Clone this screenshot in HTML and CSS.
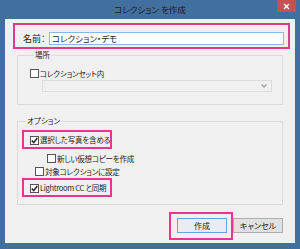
FILE: index.html
```html
<!DOCTYPE html>
<html lang="ja">
<head>
<meta charset="utf-8">
<link rel="stylesheet" href="styles.css">
</head>
<body>
<div class="window">
  <div class="titlebar">
    <span class="title">コレクション を作成</span>
    <div class="close"><svg width="7" height="7" viewBox="0 0 7 7"><path d="M1 1L6 6M6 1L1 6" stroke="#fff" stroke-width="1.4"/></svg></div>
  </div>
  <div class="client">
    <div class="hl name-row">
      <span class="name-label">名前：</span>
      <div class="input">コレクション・デモ</div>
    </div>
    <fieldset class="group place">
      <legend>場所</legend>
      <div class="check"><span class="box"></span><span class="lbl">コレクションセット内</span></div>
      <div class="select"><svg width="6" height="4" viewBox="0 0 6 4"><path d="M0.5 0.5L3 3L5.5 0.5" fill="none" stroke="#a0a0a0" stroke-width="1.3"/></svg></div>
    </fieldset>
    <fieldset class="group options">
      <legend>オプション</legend>
      <div class="hl hl-check">
        <div class="check"><span class="box checked"><svg width="7" height="7" viewBox="0 0 7 7"><path d="M0.8 3.6L2.7 5.6L6.3 1" fill="none" stroke="#222" stroke-width="1.5"/></svg></span><span class="lbl">選択した写真を含める</span></div>
      </div>
      <div class="check sub"><span class="box"></span><span class="lbl">新しい仮想コピーを作成</span></div>
      <div class="check plain"><span class="box"></span><span class="lbl">対象コレクションに設定</span></div>
      <div class="hl hl-check">
        <div class="check"><span class="box checked"><svg width="7" height="7" viewBox="0 0 7 7"><path d="M0.8 3.6L2.7 5.6L6.3 1" fill="none" stroke="#222" stroke-width="1.5"/></svg></span><span class="lbl latin">Lightroom CC と同期</span></div>
      </div>
    </fieldset>
    <div class="buttons">
      <div class="hl btn-hl"><div class="btn primary">作成</div></div>
      <div class="btn">キャンセル</div>
    </div>
  </div>
</div>
</body>
</html>
```
FILE: styles.css
```css
* { box-sizing: border-box; }
html, body { margin: 0; padding: 0; }
body {
  width: 300px;
  height: 249px;
  overflow: hidden;
  font-family: "Noto Sans CJK JP", "Noto Sans", sans-serif;
  font-feature-settings: "palt" 1;
  color: #222;
  font-size: 8px;
  white-space: nowrap;
}
.window {
  width: 300px;
  height: 249px;
  background: #41709f;
  display: flex;
  flex-direction: column;
  padding: 0 5px 6px 5px;
}
.titlebar {
  height: 19px;
  position: relative;
  display: flex;
  justify-content: center;
  align-items: flex-start;
}
.title {
  margin-top: 3px;
  font-size: 8.5px;
  line-height: 12px;
  color: #1b1b1b;
}
.close {
  position: absolute;
  right: -1px;
  top: 0;
  width: 19px;
  height: 12px;
  background: #c75050;
  display: flex;
  align-items: center;
  justify-content: center;
}
.client {
  flex: 1;
  background: #f0f0f0;
  display: flex;
  flex-direction: column;
  padding: 4px 12px 0 8px;
}
.hl {
  border: 2px solid #e4378d;
}
.name-row {
  width: 277px;
  height: 26px;
  display: flex;
  align-items: center;
  padding: 5px 4px 0 8px;
}
.name-label {
  width: 26px;
  font-size: 9px;
  line-height: 12px;
}
.input {
  width: 235px;
  height: 13px;
  background: #fff;
  border: 1px solid #8ab8e6;
  font-size: 8.5px;
  line-height: 11px;
  padding-left: 2px;
}
.group {
  margin: 1px 0 0 4px;
  width: 266px;
  border: 1px solid #dadada;
  padding: 0;
  min-width: 0;
}
.group legend {
  padding: 0 1px;
  margin-left: 4px;
  font-size: 7.5px;
  line-height: 10px;
}
.place {
  padding: 7px 0 12px 12px;
}
.check {
  display: flex;
  align-items: center;
  height: 13px;
}
.box {
  width: 9px;
  height: 9px;
  border: 1px solid #555;
  background: #fff;
  display: flex;
  align-items: center;
  justify-content: center;
  flex: none;
}
.lbl {
  margin-left: 1px;
  font-size: 7.5px;
  line-height: 12px;
  letter-spacing: -0.2px;
}
.latin {
  font-size: 7.5px;
  letter-spacing: -0.3px;
}
.select {
  margin: 0 0 0 12px;
  width: 230px;
  height: 12px;
  border: 1px solid #dcdcdc;
  display: flex;
  align-items: center;
  justify-content: flex-end;
  padding-right: 4px;
}
.options {
  margin-top: 11px;
  padding: 4px 0 7px 4px;
}
.hl-check {
  width: 90px;
  height: 19px;
  padding: 1px 0 0 6px;
  display: flex;
  align-items: center;
}
.sub {
  margin: 3px 0 0 25px;
}
.plain {
  margin: 0 0 0 13px;
}
.buttons {
  margin-top: 7px;
  display: flex;
  justify-content: flex-end;
  align-items: flex-start;
}
.btn-hl {
  width: 64px;
  height: 28px;
  padding: 4px 4px 0 6px;
}
.btn {
  width: 50px;
  height: 15px;
  border: 1px solid #adadad;
  background: #e1e1e1;
  display: flex;
  align-items: center;
  justify-content: center;
  font-size: 8px;
  line-height: 12px;
  margin-top: 6px;
}
.btn.primary {
  margin-top: 0;
  border-color: #5ea5ec;
  background: #e9edf1;
}
```
